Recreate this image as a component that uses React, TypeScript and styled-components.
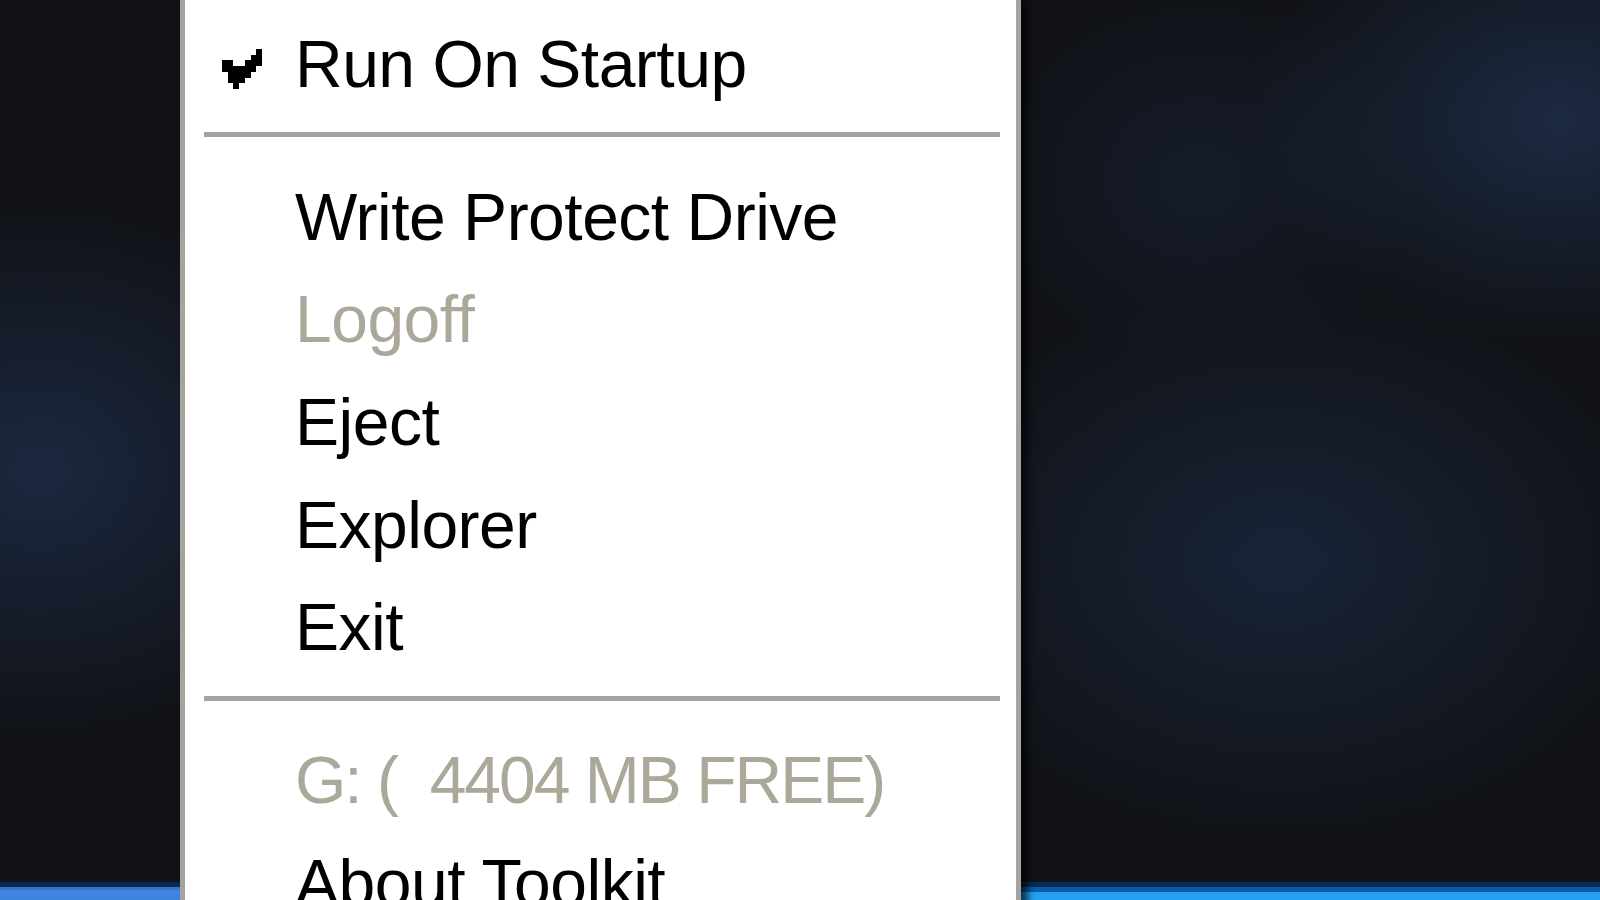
import React from 'react'
import styled, { createGlobalStyle } from 'styled-components'

const ITEM_H = 102.6

const GlobalStyle = createGlobalStyle`
  html, body {
    margin: 0;
    padding: 0;
    overflow: hidden;
  }
  body {
    font-family: "Liberation Sans", Arial, sans-serif;
  }
`

type MenuEntry =
  | { kind: 'item'; label: string; checked?: boolean; disabled?: boolean }
  | { kind: 'separator' }

const entries: MenuEntry[] = [
  { kind: 'item', label: 'Run On Startup', checked: true },
  { kind: 'separator' },
  { kind: 'item', label: 'Write Protect Drive' },
  { kind: 'item', label: 'Logoff', disabled: true },
  { kind: 'item', label: 'Eject' },
  { kind: 'item', label: 'Explorer' },
  { kind: 'item', label: 'Exit' },
  { kind: 'separator' },
  { kind: 'item', label: 'G: (  4404 MB FREE)', disabled: true, narrow: true } as MenuEntry,
  { kind: 'item', label: 'About Toolkit' },
]

// 7x7 pixel check mark, like the classic menu glyph
const checkPixels = [
  '......X',
  '.....XX',
  'XX..XXX',
  'XXXXXX.',
  '.XXXX..',
  '.XXX...',
  '..X....',
]

const CheckMark: React.FC = () => (
  <svg width="40" height="40" viewBox="0 0 7 7" shapeRendering="crispEdges">
    {checkPixels.map((row, y) =>
      row.split('').map((c, x) =>
        c === 'X' ? <rect key={`${x}-${y}`} x={x} y={y} width="1" height="1" fill="#000" /> : null
      )
    )}
  </svg>
)

const App: React.FC = () => {
  return (
    <>
      <GlobalStyle />
      <Desktop>
        <Wallpaper />
        <Taskbar>
          <TaskbarStart />
          <TaskbarStrip />
        </Taskbar>
        <Menu>
          {entries.map((entry, i) =>
            entry.kind === 'separator' ? (
              <Separator key={i}>
                <Rule />
              </Separator>
            ) : (
              <Item key={i} $disabled={entry.disabled}>
                <CheckCell>{entry.checked && <CheckMark />}</CheckCell>
                <Label $narrow={(entry as { narrow?: boolean }).narrow}>{entry.label}</Label>
              </Item>
            )
          )}
        </Menu>
      </Desktop>
    </>
  )
}

const Desktop = styled.div`
  position: relative;
  width: 1600px;
  height: 900px;
  overflow: hidden;
  display: flex;
  flex-direction: column;
  background:
    radial-gradient(ellipse 420px 360px at 40px 470px, rgba(30, 44, 72, 0.85), transparent 75%),
    radial-gradient(ellipse 520px 380px at 1280px 560px, rgba(27, 40, 64, 0.8), transparent 75%),
    radial-gradient(ellipse 420px 300px at 1560px 120px, rgba(32, 50, 82, 0.75), transparent 75%),
    radial-gradient(ellipse 300px 260px at 1200px 180px, rgba(24, 34, 56, 0.6), transparent 75%),
    #101216;
`

const Wallpaper = styled.div`
  flex: 1;
`

const Taskbar = styled.div`
  height: 18px;
  display: flex;
`

const TaskbarStart = styled.div`
  width: 180px;
  background: linear-gradient(#0a2a55 0 5px, #3a72c6 5px 8px, #3f84e0 8px);
`

const TaskbarStrip = styled.div`
  flex: 1;
  background: linear-gradient(#062c58 0 5px, #0b5ba9 5px 10px, #23a0f0 10px);
`

const Menu = styled.div`
  position: absolute;
  top: 0;
  left: 180px;
  width: 841px;
  box-sizing: border-box;
  padding-top: 12.8px;
  background: #ffffff;
  border: 5px solid #a6a49e;
  border-top: none;
  box-shadow: 7px 0 7px rgba(0, 0, 0, 0.65);
  font-family: "Liberation Sans", Arial, sans-serif;
  font-size: 66px;
  letter-spacing: -0.5px;
`

const Item = styled.div<{ $disabled?: boolean }>`
  display: flex;
  align-items: flex-start;
  height: ${ITEM_H}px;
  color: ${p => (p.$disabled ? '#aca899' : '#000000')};
`

const CheckCell = styled.div`
  width: 110px;
  flex-shrink: 0;
  box-sizing: border-box;
  padding: 36px 0 0 37px;
  line-height: 0;
`

const Label = styled.span<{ $narrow?: boolean }>`
  line-height: ${ITEM_H}px;
  white-space: pre;
  letter-spacing: ${p => (p.$narrow ? '-2px' : '-0.5px')};
`

const Separator = styled.div`
  padding: 17px 16px 28.4px 19px;
`

const Rule = styled.div`
  height: 5px;
  background: #a6a49e;
`

export default App
